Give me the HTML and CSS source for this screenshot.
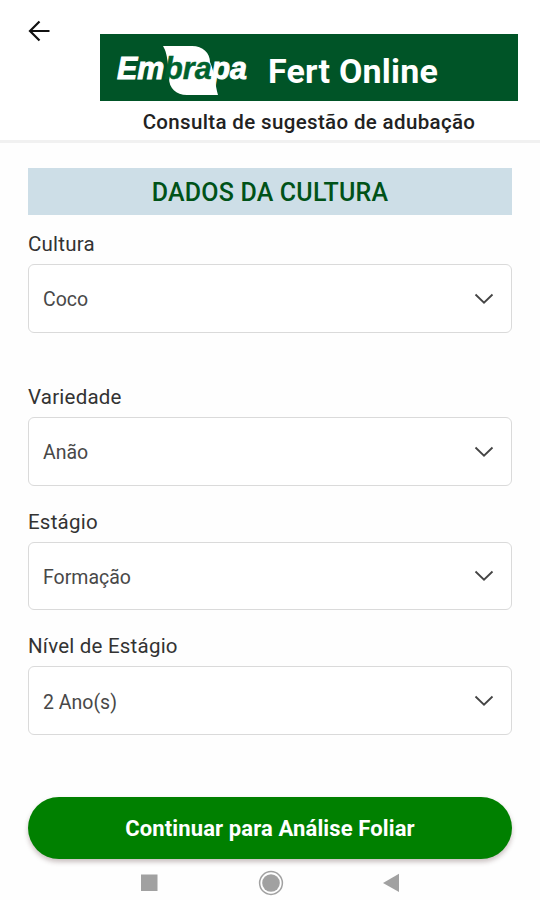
FILE: index.html
```html
<!DOCTYPE html>
<html lang="pt-BR">
<head>
<meta charset="utf-8">
<title>Fert Online</title>
<link rel="stylesheet" href="styles.css">
</head>
<body>
<header class="header">
  <svg class="back" viewBox="0 0 24 24" aria-label="Voltar"><path d="M22.500 12H3M12.500 2.500L3 12l9.500 9.500"/></svg>
  <div class="brand">
    <div class="banner">
      <svg class="logo" viewBox="0 0 140 60">
        <path class="leaf" d="M52 8H81C92 8 99 15 99 24C104 35 104 47 107 57H76C65 57 58 50 58 40L57 27C56 18 55 13 52 8Z"/>
        <text class="logo-text" x="6" y="40.500" textLength="130" lengthAdjust="spacingAndGlyphs">Em<tspan class="logo-dark">bra</tspan>pa</text>
      </svg>
      <h1 class="title">Fert Online</h1>
    </div>
    <p class="subtitle">Consulta de sugestão de adubação</p>
  </div>
</header>
<main class="content">
  <h2 class="section">DADOS DA CULTURA</h2>
  <div class="field field-first">
    <div class="label">Cultura</div>
    <div class="select"><span>Coco</span><svg class="chevron" viewBox="0 0 20 12"><path d="M1.500 1.500L10 9.700l8.500-8.200"/></svg></div>
  </div>
  <div class="field">
    <div class="label">Variedade</div>
    <div class="select"><span>Anão</span><svg class="chevron" viewBox="0 0 20 12"><path d="M1.500 1.500L10 9.700l8.500-8.200"/></svg></div>
  </div>
  <div class="field">
    <div class="label">Estágio</div>
    <div class="select"><span>Formação</span><svg class="chevron" viewBox="0 0 20 12"><path d="M1.500 1.500L10 9.700l8.500-8.200"/></svg></div>
  </div>
  <div class="field field-last">
    <div class="label">Nível de Estágio</div>
    <div class="select"><span>2 Ano(s)</span><svg class="chevron" viewBox="0 0 20 12"><path d="M1.500 1.500L10 9.700l8.500-8.200"/></svg></div>
  </div>
  <button class="continue">Continuar para Análise Foliar</button>
</main>
<nav class="navbar">
  <svg class="nav-icon" viewBox="0 0 28 28"><path class="nav-fill" d="M6 5.500h16.500V22H6z"/></svg>
  <svg class="nav-icon" viewBox="0 0 28 28"><circle class="nav-ring" cx="14" cy="14" r="11.400"/><circle class="nav-fill" cx="14" cy="14" r="8.800"/></svg>
  <svg class="nav-icon" viewBox="0 0 28 28"><path class="nav-fill" d="M5 14L21 4.800v18.300z"/></svg>
</nav>
</body>
</html>
```
FILE: styles.css
```css
* { box-sizing: border-box; }
body {
  margin: 0;
  width: 540px;
  height: 900px;
  overflow: hidden;
  background: #fefefe;
  font-family: Roboto, "Liberation Sans", sans-serif;
  color: #333;
}
.header {
  display: flex;
  height: 143px;
  padding: 0 22px 0 27px;
  border-bottom: 3px solid #f1f1f1;
  background: #fff;
}
.back {
  width: 24px;
  height: 24px;
  margin: 19px 49px 0 0;
  fill: none;
  stroke: #111;
  stroke-width: 2.200;
}
.brand { width: 418px; padding-top: 34px; }
.banner {
  display: flex;
  align-items: center;
  height: 67px;
  background: #005427;
}
.logo { width: 140px; height: 60px; margin: 1px 17px 0 11px; }
.leaf { fill: #fff; }
.logo-text {
  font: italic 700 32px "Liberation Sans", Roboto, sans-serif;
  fill: #fff;
  stroke: #fff;
  stroke-width: 1;
}
.logo-dark { fill: #00622e; stroke: #00622e; stroke-width: .5; }
.title {
  margin: 6px 0 0;
  font-size: 34px;
  line-height: 40px;
  font-weight: 700;
  letter-spacing: .2px;
  color: #fff;
  white-space: nowrap;
}
.subtitle {
  margin: 7px 0 0;
  text-align: center;
  font-size: 20.500px;
  line-height: 28px;
  font-weight: 500;
  letter-spacing: .35px;
  color: #222;
  white-space: nowrap;
}
.content { padding: 25px 28px 0; }
.section {
  margin: 0 0 15px;
  height: 47px;
  text-align: center;
  font-size: 25px;
  line-height: 49px;
  font-weight: 500;
  letter-spacing: .18px;
  color: #005218;
  background: #cddee7;
}
.field { margin-bottom: 22px; }
.field-first { margin-bottom: 50px; }
.field-last { margin-bottom: 0; }
.label {
  height: 34px;
  font-size: 20.500px;
  line-height: 28px;
  letter-spacing: .22px;
}
.select {
  display: flex;
  align-items: center;
  justify-content: space-between;
  height: 68.800px;
  padding: 3px 17px 0 14px;
  border: 1.500px solid #dadada;
  border-radius: 6px;
  background: #fff;
  font-size: 19.500px;
  color: #484848;
}
.chevron {
  width: 20px;
  height: 12px;
  margin-top: -2px;
  fill: none;
  stroke: #444;
  stroke-width: 1.800;
}
.continue {
  display: block;
  width: 484px;
  height: 62px;
  margin-top: 61.800px;
  padding: 2px 0 0;
  border: 0;
  border-radius: 31px;
  background: #008000;
  box-shadow: 0 3px 5px rgba(60, 30, 30, .28);
  font: 700 22px Roboto, "Liberation Sans", sans-serif;
  letter-spacing: .12px;
  color: #fff;
}
.navbar {
  display: flex;
  justify-content: space-between;
  padding: 10px 134px 0 135px;
}
.nav-icon { width: 28px; height: 28px; }
.nav-fill { fill: #a1a1a1; }
.nav-ring { fill: none; stroke: #a1a1a1; stroke-width: 1.500; }
```
